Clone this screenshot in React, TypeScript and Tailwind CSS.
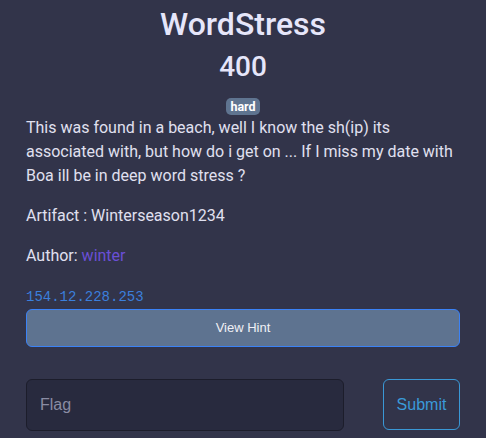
import React from "react";

export default function App() {
  return (
    <div className="min-h-[438px] w-full bg-[#32344a] px-[26px] pt-[5px]" style={{ fontFamily: "Roboto, sans-serif" }}>
      <h1 className="text-center text-[32px] font-medium leading-[38px] text-[#e6e6fa]">WordStress</h1>
      <h2 className="mt-[7px] text-center text-[28px] font-medium leading-[34px] text-[#e6e6fa]">400</h2>
      <div className="mt-[14px] flex justify-center">
        <span className="rounded-[5px] bg-[#5f7490] px-[4px] text-[12.5px] font-bold leading-[17px] text-white">hard</span>
      </div>
      <div className="mt-[1px] text-[16px] leading-[24px] text-[#e0e0f0]">
        <p>This was found in a beach, well I know the sh(ip) its associated with, but how do i get on ... If I miss my date with Boa ill be in deep word stress ?</p>
        <p className="mt-[16px]">Artifact : Winterseason1234</p>
        <p className="mt-[16px]">
          Author: <span className="text-[#6a4fd6]">winter</span>
        </p>
      </div>
      <div className="mt-[20px] text-[14px] leading-[18px] text-[#3b7fdc]" style={{ fontFamily: "'Liberation Mono', monospace" }}>
        154.12.228.253
      </div>
      <button
        className="mt-[3px] flex h-[38px] w-full items-center justify-center rounded-[6px] border border-[#3b82f6] bg-[#5e7390] text-[13px] text-[#f0f0f5]"
        style={{ fontFamily: "'Liberation Sans', Arial, sans-serif" }}
      >
        View Hint
      </button>
      <div className="mt-[32px] flex items-start justify-between" style={{ fontFamily: "'Liberation Sans', Arial, sans-serif" }}>
        <div className="flex h-[52px] w-[318px] items-center rounded-[6px] border border-[#1c1d2b] bg-[#282a3e] px-[13px] text-[16px] text-[#8a8ca3]">
          Flag
        </div>
        <button className="flex h-[51px] w-[77px] items-center justify-center rounded-[6px] border border-[#3a98d6] text-[16px] text-[#3a9ad9]">
          Submit
        </button>
      </div>
    </div>
  );
}
